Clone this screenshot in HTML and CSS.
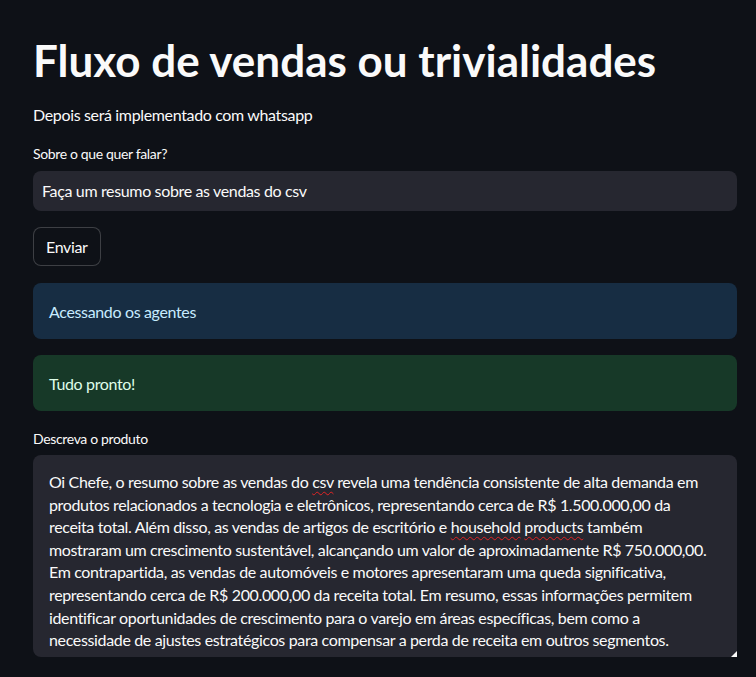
FILE: index.html
```html
<!DOCTYPE html>
<html lang="pt">
<head>
<meta charset="utf-8">
<title>Fluxo de vendas ou trivialidades</title>
<link rel="stylesheet" href="styles.css">
</head>
<body>
<main class="main">
  <h1 class="title">Fluxo de vendas ou trivialidades</h1>
  <p class="subtitle">Depois será implementado com whatsapp</p>

  <div class="field">
    <label class="label">Sobre o que quer falar?</label>
    <div class="input">Faça um resumo sobre as vendas do csv</div>
  </div>

  <div class="btn-row"><button class="btn">Enviar</button></div>

  <div class="alert alert-info">Acessando os agentes</div>
  <div class="alert alert-success">Tudo pronto!</div>

  <div class="field field-area">
    <label class="label">Descreva o produto</label>
    <div class="textarea">
      <p class="area-text">Oi Chefe, o resumo sobre as vendas do <span class="spell">csv</span> revela uma tendência consistente de alta demanda em<br>produtos relacionados a tecnologia e eletrônicos, representando cerca de R$ 1.500.000,00 da<br>receita total. Além disso, as vendas de artigos de escritório e <span class="spell">household</span> <span class="spell">products</span> também<br>mostraram um crescimento sustentável, alcançando um valor de aproximadamente R$ 750.000,00.<br>Em contrapartida, as vendas de automóveis e motores apresentaram uma queda significativa,<br>representando cerca de R$ 200.000,00 da receita total. Em resumo, essas informações permitem<br>identificar oportunidades de crescimento para o varejo em áreas específicas, bem como a<br>necessidade de ajustes estratégicos para compensar a perda de receita em outros segmentos.</p>
      <span class="resize-handle"></span>
    </div>
  </div>
</main>
</body>
</html>
```

FILE: styles.css
```css
html, body {
  margin: 0;
  padding: 0;
  background: #0e1117;
}
body {
  font-family: Lato, "Noto Sans", sans-serif;
  color: #fafafa;
  letter-spacing: -0.35px;
  width: 756px;
  height: 677px;
  overflow: hidden;
}
.main {
  display: flex;
  flex-direction: column;
  padding: 30px 19px 0 33px;
}
.title {
  margin: 0;
  font-size: 44px;
  font-weight: 700;
  line-height: 60px;
  letter-spacing: 0;
}
.subtitle {
  margin: 13px 0 0 0;
  font-size: 16px;
  line-height: 24px;
}
.field {
  display: flex;
  flex-direction: column;
  margin-top: 17px;
}
.label {
  font-size: 14px;
  line-height: 20px;
  margin-bottom: 7px;
}
.input {
  height: 40px;
  box-sizing: border-box;
  background: #262730;
  border-radius: 8px;
  padding: 0 9px;
  font-size: 16px;
  line-height: 40px;
}
.btn-row {
  margin-top: 16px;
  display: flex;
}
.btn {
  font-family: inherit;
  font-size: 16px;
  letter-spacing: inherit;
  color: #fafafa;
  background: #0e1117;
  border: 1px solid rgba(250, 250, 250, 0.2);
  border-radius: 8px;
  height: 39px;
  padding: 0 12px;
}
.alert {
  margin-top: 17px;
  height: 56px;
  box-sizing: border-box;
  border-radius: 8px;
  padding: 0 16px;
  display: flex;
  align-items: center;
  font-size: 16px;
}
.alert-info {
  background: #172d43;
  color: #c7ebff;
}
.alert-success {
  margin-top: 16px;
  background: #173928;
  color: #dffde9;
}
.field-area {
  margin-top: 18px;
}
.field-area .label {
  margin-bottom: 6px;
}
.textarea {
  position: relative;
  background: #262730;
  border-radius: 8px 8px 0 8px;
  height: 202px;
  box-sizing: border-box;
  padding: 16px 16px 0 16px;
}
.area-text {
  margin: 0;
  font-size: 16px;
  line-height: 22.6px;
  white-space: nowrap;
}
.spell {
  text-decoration: underline wavy #e02424;
  text-decoration-thickness: 1px;
  text-underline-offset: 3px;
}
.resize-handle {
  position: absolute;
  right: 0;
  bottom: 0;
  width: 0;
  height: 0;
  border-left: 6px solid transparent;
  border-bottom: 6px solid #fafafa;
}
```
